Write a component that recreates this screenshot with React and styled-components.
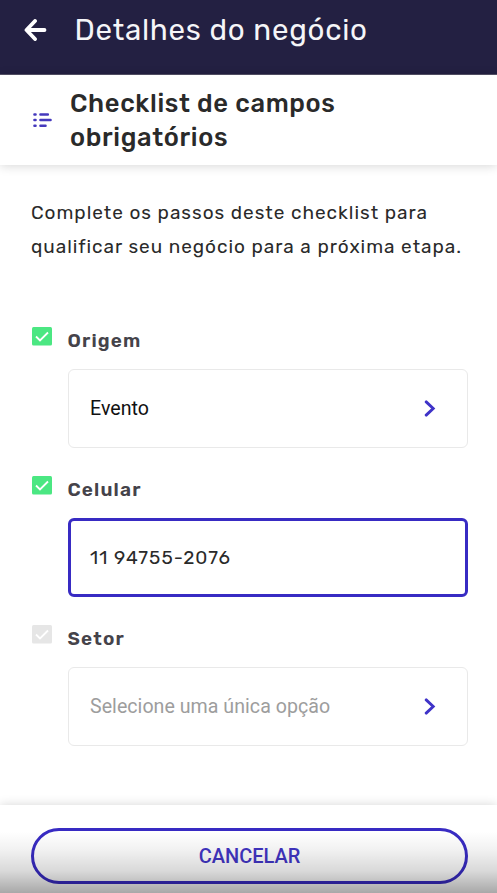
import React from "react";
import styled, { createGlobalStyle } from "styled-components";

const Global = createGlobalStyle`
  *{box-sizing:border-box}
  body{margin:0;background:#fff;overflow:hidden}
`;
const Screen = styled.div`
  width:497px;height:893px;display:flex;flex-direction:column;background:#fff;
  font-family:Rubik,Roboto,sans-serif;color:#2a2a2a;
`;
const AppBar = styled.header`
  height:75px;flex:none;background:#232042;color:#f5f5f8;display:flex;padding:14px 0 0 24px;gap:27.5px;
  border-bottom:1px solid #555268;
  svg{display:block;margin-top:5px}
`;
const AppTitle = styled.h1`
  margin:0;font-size:29.5px;line-height:32px;font-weight:400;letter-spacing:.72px;white-space:nowrap;
`;
const SubHeader = styled.section`
  height:90px;flex:none;display:flex;align-items:center;padding-left:33px;gap:18px;
  box-shadow:0 1px 10px rgba(0,0,0,.16);
  svg{margin-top:-1px}
`;
const Heading = styled.h2`
  margin:0;font-size:25.5px;line-height:34px;font-weight:500;letter-spacing:.65px;white-space:nowrap;
`;
const Body = styled.main`
  flex:1;padding:31px 29px 0 31px;
`;
const Intro = styled.p`
  margin:0 0 66px;font-size:19px;line-height:33.5px;font-weight:400;letter-spacing:.97px;white-space:nowrap;
`;
const Step = styled.div`
  display:grid;grid-template-columns:22px 1fr;column-gap:14.5px;height:149px;
  > svg{margin-top:-3px}
`;
const Label = styled.div`
  font-size:19px;font-weight:600;line-height:26px;letter-spacing:1.15px;color:#45434a;margin:-1px 0 15px;
`;
const Field = styled.div`
  height:79px;border-radius:6px;border:${p => p.$active ? "3px solid #382bc3" : "1.5px solid #e9e9e9"};
  padding:0 ${p => p.$active ? 30 : 31.5}px 0 ${p => p.$active ? 19.5 : 21.5}px;
  display:flex;align-items:center;justify-content:space-between;
  font:${p => p.$active ? "400 19px Rubik,Roboto,sans-serif" : "400 19.6px Roboto,sans-serif"};
  letter-spacing:${p => p.$active ? "1px" : ".03px"};
  color:${p => p.$muted ? "#9d9d9d" : p.$active ? "#2a2a2a" : "#111"};
`;
const Footer = styled.footer`
  position:relative;height:88px;flex:none;padding:23px 29px 0 31px;box-shadow:0 0 10px rgba(0,0,0,.16);
  &::after{
    content:"";position:absolute;inset:0;pointer-events:none;
    background:linear-gradient(to bottom,transparent 30%,rgba(0,0,0,.05) 50%,rgba(0,0,0,.15) 75%,rgba(0,0,0,.34) 100%);
  }
`;
const Cancel = styled.button`
  width:100%;height:56px;border:3px solid #382bc3;border-radius:28px;background:#fff;color:#4135c4;
  font:500 20px/1 Roboto,sans-serif;padding:0 0 1px;
`;
const Check = ({ on }) => (
  <svg width="22" height="22" viewBox="0 0 22 22">
    <rect x="1" y="1" width="20" height="18.5" rx="1.5" fill={on ? "#4be782" : "#e6e6e6"} />
    <path d="M5 10.5l4 4 8-8" fill="none" stroke="#fff" strokeWidth="1.8" />
  </svg>
);
const Chevron = () => (
  <svg width="12" height="18" viewBox="0 0 12 18">
    <path d="M2.2 1.9l7 6.6-7 6.6" fill="none" stroke="#3f33c8" strokeWidth="2.9" strokeLinecap="round" />
  </svg>
);
export default function App() {
  return (
    <Screen>
      <Global />
      <AppBar>
        <svg width="23" height="22" viewBox="0 0 23 22">
          <path d="M20.5 11H3.5M11 2L2.5 11l8.5 9" fill="none" stroke="#fff" strokeWidth="3.8" strokeLinecap="round" strokeLinejoin="round" />
        </svg>
        <AppTitle>Detalhes do negócio</AppTitle>
      </AppBar>
      <SubHeader>
        <svg width="19" height="16" viewBox="0 0 19 16">
          <path d="M1.4 2.5h1.2M7.4 2.5h7.5M1.4 8h1.2M7.4 8h10.2M1.4 13.7h1.2M7.4 13.7h5.2" stroke="#4539bd" strokeWidth="2.4" strokeLinecap="round" />
        </svg>
        <Heading>Checklist de campos<br />obrigatórios</Heading>
      </SubHeader>
      <Body>
        <Intro>Complete os passos deste checklist para<br />qualificar seu negócio para a próxima etapa.</Intro>
        <Step><Check on /><div><Label>Origem</Label><Field>Evento<Chevron /></Field></div></Step>
        <Step><Check on /><div><Label>Celular</Label><Field $active>11 94755-2076</Field></div></Step>
        <Step><Check /><div><Label>Setor</Label><Field $muted>Selecione uma única opção<Chevron /></Field></div></Step>
      </Body>
      <Footer><Cancel>CANCELAR</Cancel></Footer>
    </Screen>
  );
}
